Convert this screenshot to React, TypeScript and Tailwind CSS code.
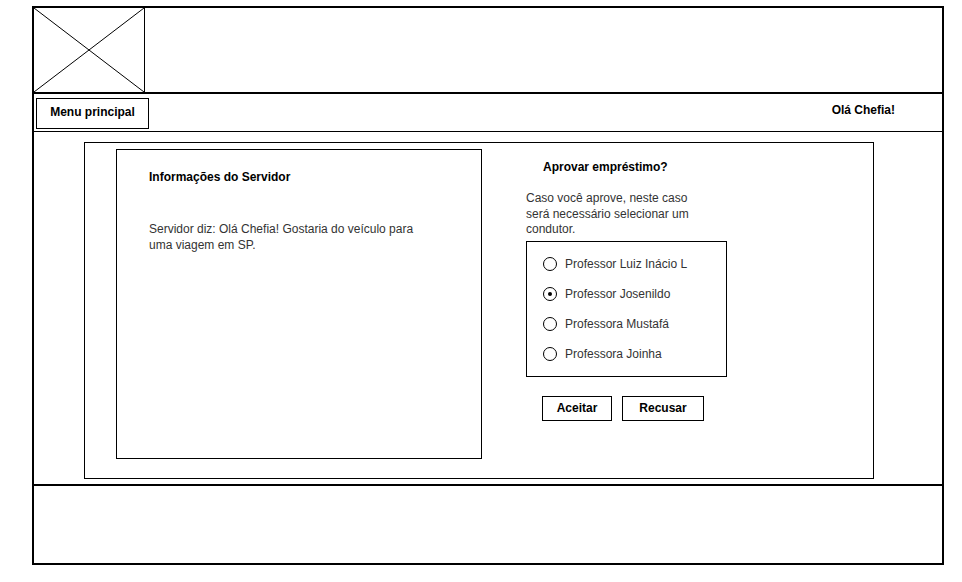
import { useState } from 'react';

const DRIVERS = [
  'Professor Luiz Inácio L',
  'Professor Josenildo',
  'Professora Mustafá',
  'Professora Joinha',
];

function ImagePlaceholder() {
  return (
    <div className="w-[111px] h-[84px] border-r border-black shrink-0">
      <svg width="110" height="84" viewBox="0 0 110 84" className="block">
        <line x1="0" y1="0" x2="110" y2="84" stroke="#000" strokeWidth="1" />
        <line x1="110" y1="0" x2="0" y2="84" stroke="#000" strokeWidth="1" />
      </svg>
    </div>
  );
}

function Radio({ checked }: { checked: boolean }) {
  return (
    <span className="w-[14px] h-[14px] rounded-full border border-black bg-white flex items-center justify-center shrink-0">
      {checked && <span className="w-[4px] h-[4px] rounded-full bg-black" />}
    </span>
  );
}

export default function App() {
  const [selected, setSelected] = useState(1);

  return (
    <div
      className="w-[962px] h-[582px] bg-white pl-[32px] pt-[6px] text-[12px] leading-[14px] text-[#333]"
      style={{ fontFamily: '"Liberation Sans", Arial, sans-serif' }}
    >
      <div className="w-[912px] border-2 border-black flex flex-col">
        {/* Header */}
        <div className="h-[86px] border-b-2 border-black flex">
          <ImagePlaceholder />
        </div>

        {/* Nav */}
        <div className="h-[38px] border-b border-black flex items-start">
          <button className="ml-[2px] mt-[4px] w-[113px] h-[31px] pb-[3px] border border-black bg-white font-bold text-black">
            Menu principal
          </button>
          <div className="flex-1" />
          <span className="mt-[9px] mr-[47px] font-bold text-black">Olá Chefia!</span>
        </div>

        {/* Main */}
        <div className="h-[352px] pt-[10px] pl-[50px]">
          <div className="w-[790px] h-[337px] border border-black flex items-start">
            {/* Server info */}
            <div className="ml-[31px] mt-[6px] w-[366px] h-[310px] border border-black pl-[32px] pt-[20px]">
              <div className="font-bold text-black">Informações do Servidor</div>
              <p className="mt-[37px] w-[275px] leading-[16px]">
                Servidor diz: Olá Chefia! Gostaria do veículo para uma viagem em SP.
              </p>
            </div>

            {/* Approval */}
            <div className="ml-[44px] mt-[17px] flex flex-col">
              <div className="ml-[17px] font-bold text-black">Aprovar empréstimo?</div>
              <p className="mt-[17px] w-[170px] leading-[15.5px]">
                Caso você aprove, neste caso será necessário selecionar um condutor.
              </p>
              <div className="mt-[3px] w-[201px] border border-black pt-[7px] pb-[7px] pl-[16px]">
                {DRIVERS.map((name, i) => (
                  <label
                    key={name}
                    className="h-[30px] flex items-center gap-[8px] cursor-pointer"
                    onClick={() => setSelected(i)}
                  >
                    <Radio checked={selected === i} />
                    <span className="whitespace-nowrap">{name}</span>
                  </label>
                ))}
              </div>
              <div className="mt-[19px] ml-[16px] flex gap-[10px]">
                <button className="w-[70px] h-[25px] border border-black bg-white font-bold text-black">
                  Aceitar
                </button>
                <button className="w-[82px] h-[25px] border border-black bg-white font-bold text-black">
                  Recusar
                </button>
              </div>
            </div>
          </div>
        </div>

        {/* Footer */}
        <div className="h-[79px] border-t-2 border-black" />
      </div>
    </div>
  );
}
